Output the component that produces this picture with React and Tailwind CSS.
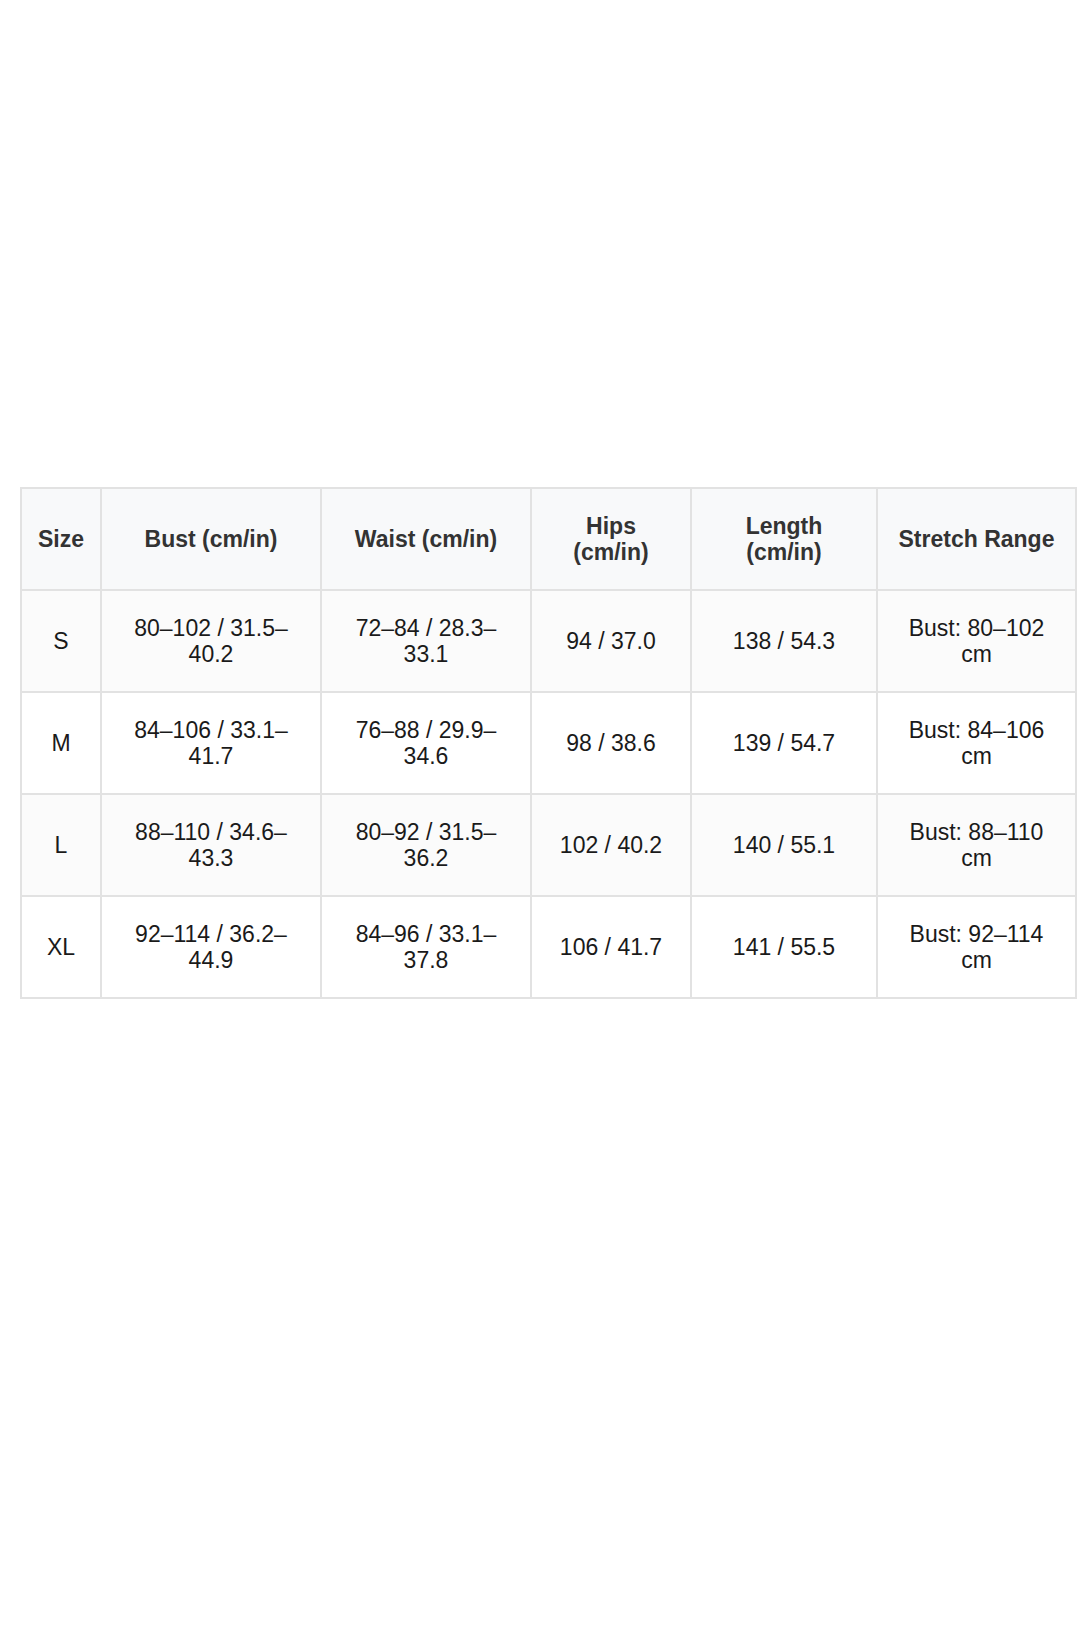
import React from "react";

const rows = [
  ["S", "80–102 / 31.5–40.2", "72–84 / 28.3–33.1", "94 / 37.0", "138 / 54.3", "Bust: 80–102"],
  ["M", "84–106 / 33.1–41.7", "76–88 / 29.9–34.6", "98 / 38.6", "139 / 54.7", "Bust: 84–106"],
  ["L", "88–110 / 34.6–43.3", "80–92 / 31.5–36.2", "102 / 40.2", "140 / 55.1", "Bust: 88–110"],
  ["XL", "92–114 / 36.2–44.9", "84–96 / 33.1–37.8", "106 / 41.7", "141 / 55.5", "Bust: 92–114"],
];

const headers = ["Size", "Bust (cm/in)", "Waist (cm/in)", "Hips (cm/in)", "Length (cm/in)", "Stretch Range"];

export default function App() {
  return (
    <div className="w-[1088px] h-[1632px] bg-white pt-[487px] pl-[20px]" style={{ fontFamily: '"Liberation Sans", Arial, sans-serif' }}>
      <table className="table-fixed border-collapse w-[1055px] text-[23px] leading-[26px]">
        <colgroup>
          <col className="w-[80px]" />
          <col className="w-[220px]" />
          <col className="w-[210px]" />
          <col className="w-[160px]" />
          <col className="w-[186px]" />
          <col className="w-[199px]" />
        </colgroup>
        <thead>
          <tr className="h-[102px] bg-[#f8f9fa]">
            {headers.map((h) => (
              <th key={h} className="border-2 border-[#e2e2e2] px-[14px] text-center align-middle font-bold text-[#333333]">
                {h}
              </th>
            ))}
          </tr>
        </thead>
        <tbody>
          {rows.map((r, i) => (
            <tr key={r[0]} className={i % 2 === 0 ? "h-[102px] bg-[#fbfbfb]" : "h-[102px] bg-white"}>
              {r.map((c, j) => (
                <td key={j} className="border-2 border-[#e2e2e2] px-[14px] text-center align-middle text-[#1a1a1a]">
                  {j === 5 ? (
                    <>
                      {c}
                      <br />
                      cm
                    </>
                  ) : (
                    c
                  )}
                </td>
              ))}
            </tr>
          ))}
        </tbody>
      </table>
    </div>
  );
}
